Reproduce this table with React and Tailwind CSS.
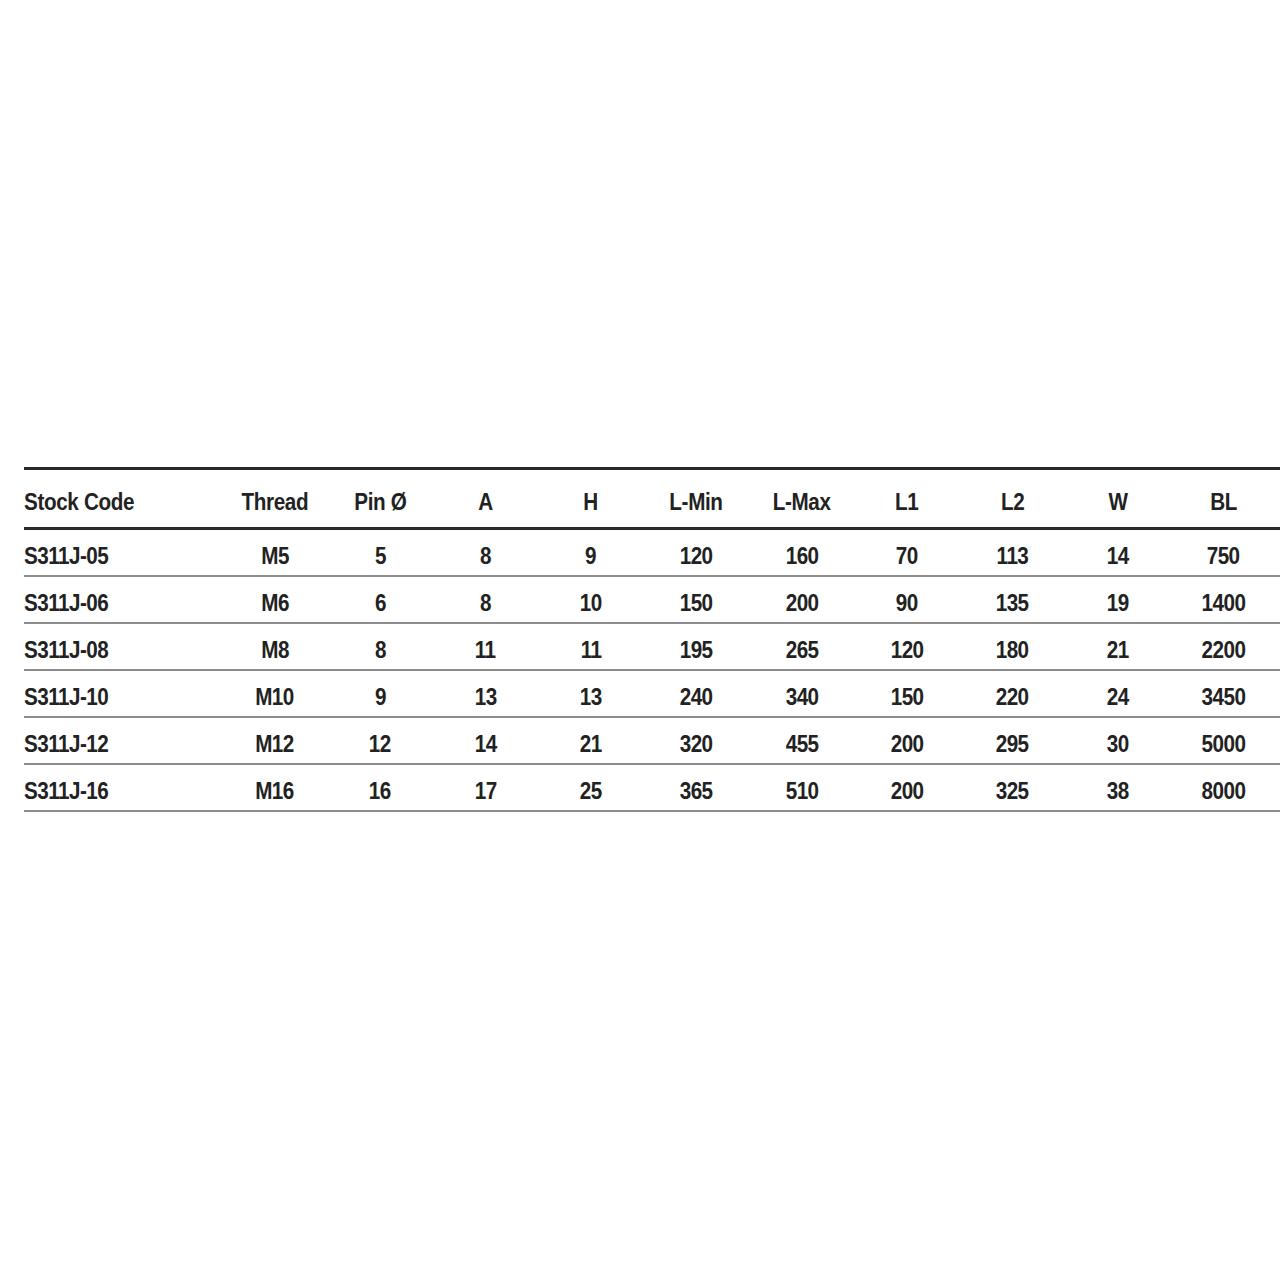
import React from "react";

const headers = ["Stock Code", "Thread", "Pin Ø", "A", "H", "L-Min", "L-Max", "L1", "L2", "W", "BL"];
const rows = [
  ["S311J-05", "M5", "5", "8", "9", "120", "160", "70", "113", "14", "750"],
  ["S311J-06", "M6", "6", "8", "10", "150", "200", "90", "135", "19", "1400"],
  ["S311J-08", "M8", "8", "11", "11", "195", "265", "120", "180", "21", "2200"],
  ["S311J-10", "M10", "9", "13", "13", "240", "340", "150", "220", "24", "3450"],
  ["S311J-12", "M12", "12", "14", "21", "320", "455", "200", "295", "30", "5000"],
  ["S311J-16", "M16", "16", "17", "25", "365", "510", "200", "325", "38", "8000"],
];

const grid = "grid grid-cols-[198px_repeat(10,105.4px)] items-center";

function Cell({ i, children }) {
  return (
    <div className={i === 0 ? "text-left" : "text-center"}>
      <span className={`inline-block whitespace-nowrap scale-x-[0.86] ${i === 0 ? "origin-left" : "origin-center"}`}>
        {children}
      </span>
    </div>
  );
}

export default function App() {
  return (
    <div
      className="w-[1280px] h-[1280px] bg-white pt-[467px] pl-[24px] text-[#222222]"
      style={{ fontFamily: '"Liberation Sans Narrow", "Liberation Sans", Arial, sans-serif' }}
    >
      <div className="border-t-[3px] border-[#2a2a2a]">
        <div className={`${grid} h-[57px] pt-[6px] text-[24px] font-bold tracking-[-0.4px]`}>
          {headers.map((h, i) => (
            <Cell key={i} i={i}>{h}</Cell>
          ))}
        </div>
        <div className="border-t-[3px] border-[#2a2a2a]"></div>
        {rows.map((r, ri) => (
          <div key={ri} className="border-b-2 border-[#8c8c8c]">
            <div className={`${grid} h-[45px] pt-[7px] text-[24px] font-bold tracking-[-0.6px]`}>
              {r.map((c, i) => (
                <Cell key={i} i={i}>{c}</Cell>
              ))}
            </div>
          </div>
        ))}
      </div>
    </div>
  );
}
